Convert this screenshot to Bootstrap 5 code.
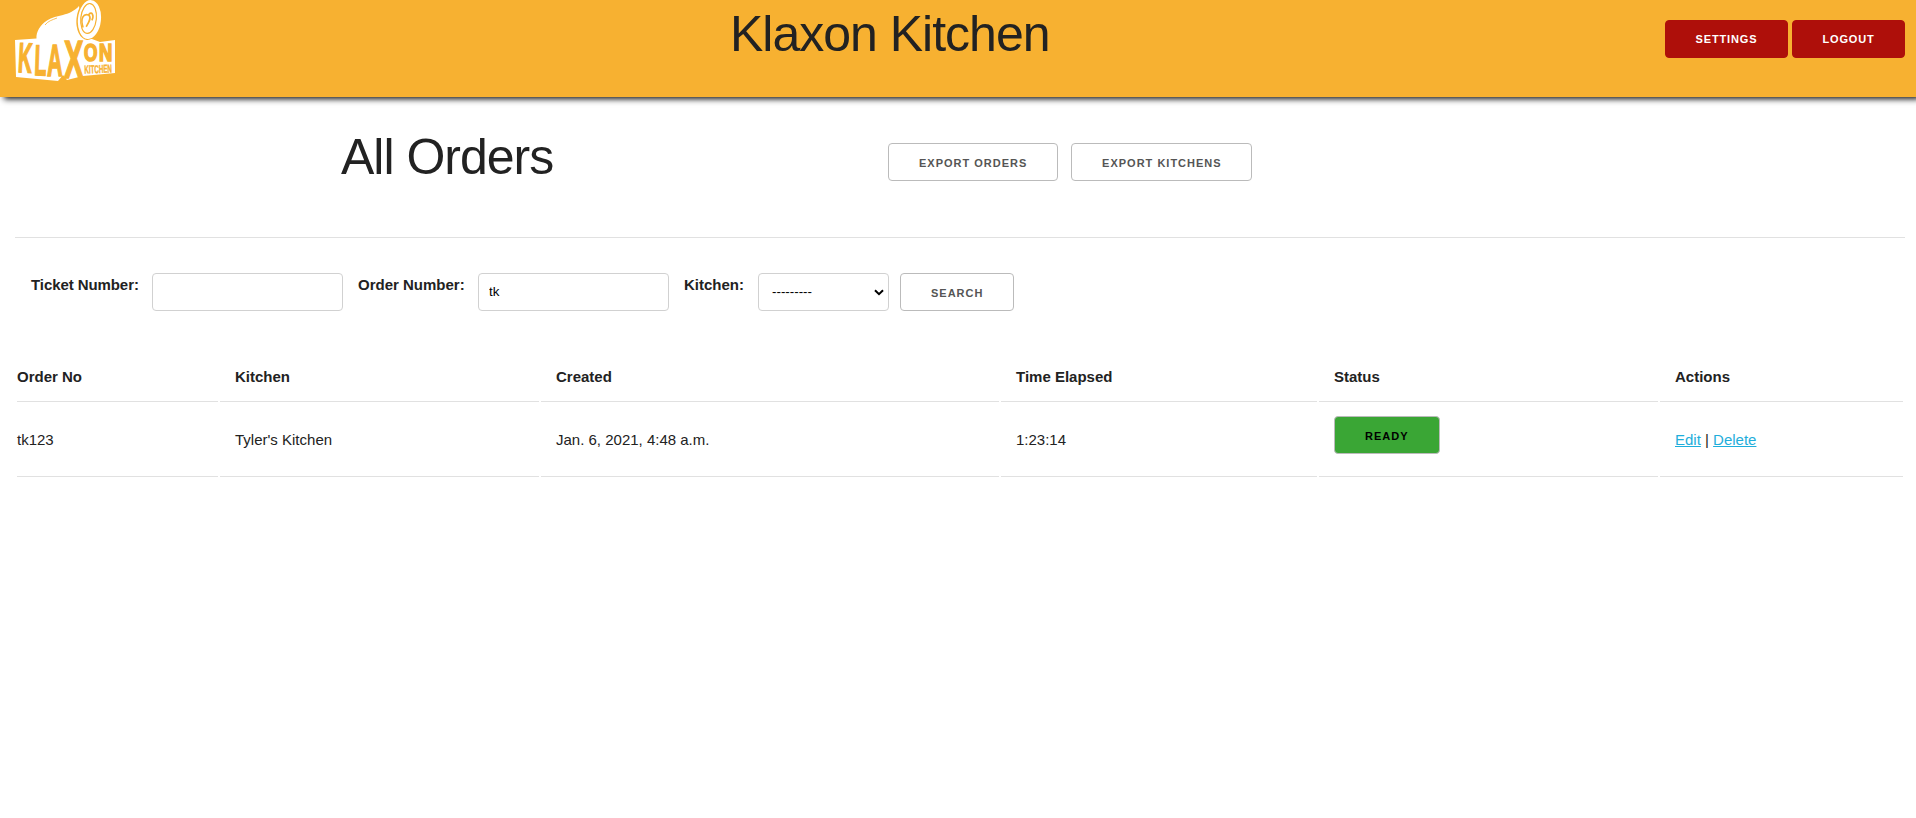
<!DOCTYPE html>
<html lang="en">
<head>
<meta charset="utf-8">
<title>Klaxon Kitchen</title>
<link href="https://cdn.jsdelivr.net/npm/bootstrap@5.3.0/dist/css/bootstrap.min.css" rel="stylesheet">
<style>
body{font:15px/24px "Liberation Sans",Arial,sans-serif;color:#222;background:#fff}
.topbar{height:97px;background:#f7b131;box-shadow:4px 2px 6px #111;padding:0 11px 0 15px}
h1{font-size:50px;line-height:60px;letter-spacing:-1px;font-weight:400;margin:0;color:#222}
.brand-logo{flex:none;overflow:visible}
.brand-logo text{font-family:"Liberation Sans",Arial,sans-serif;font-weight:700;fill:#f7b131;stroke:#f7b131;stroke-width:1.6px}
.brand-logo .logo-sub{stroke-width:.4px}
.brand-title{padding-top:4px;margin-left:613px}
.kbtn{height:38px;padding:2px 30px 0;font-size:11px;font-weight:600;line-height:34px;letter-spacing:1px;border:1px solid #bbb;border-radius:4px;color:#555;background:#fff;text-transform:uppercase;white-space:nowrap;text-align:center}
.kbtn-red{background:#ae0f0a;border-color:#ae0f0a;color:#fff;padding:0;line-height:36px;letter-spacing:.85px;width:123px}
.kbtn-logout{width:113px}
.kbtn-ready{background:#3aa635;border-color:#bbb;color:#000;margin-bottom:10px}
.kbtn-kitchens{width:181px;padding-left:0;padding-right:0}
.account{padding-top:20px}
.heading-row{height:141px;margin:0 11px 0 15px;border-bottom:1px solid #e1e1e1;padding-left:326px}
.heading-row h1{padding-top:30px;width:547px}
.exports{gap:13px;padding-top:46px}
.filters{padding:35px 0 0 31px;height:113px}
.filters label{font-weight:600;line-height:24px;white-space:nowrap}
.filters .form-control,.filters .form-select{width:191px;height:38px;padding:5px 10px 7px;border:1px solid #d1d1d1;border-radius:4px;font-size:13.333px;line-height:normal;color:#000}
.filters .form-select{width:131px;padding-left:13px;background:#fff url("data:image/svg+xml,%3Csvg xmlns='http://www.w3.org/2000/svg' width='10' height='7'%3E%3Cpath d='M1 1.2l4 4 4-4' fill='none' stroke='%23000' stroke-width='2'/%3E%3C/svg%3E") no-repeat right 4px center/10px 7px}
.label-ticket{width:121px;letter-spacing:-.08px}
.label-order{width:120px;margin-left:15px}
.label-kitchen{width:74px;margin-left:15px}
.btn-search{margin-left:11px}
.orders{width:1890px;margin-left:15px;border-collapse:separate;border-spacing:2px;table-layout:fixed}
.orders th,.orders td{padding:12px 15px;border-bottom:1px solid #e1e1e1;text-align:left;vertical-align:middle}
.orders th{font-weight:600}
.orders th:first-child,.orders td:first-child{padding-left:0}
.orders a{color:#1eaedb}
</style>
</head>
<body>
<header class="topbar d-flex align-items-start">
<svg class="brand-logo" width="102" height="83" viewBox="0 0 102 83" role="img" aria-label="Klaxon Kitchen">
<path fill="#fff" d="M0 40 21.5 38.5C21 32 25 25 32 20.500C42 14 54 17 64 6L69 36 85 42 100 40V73L68 76 52 80 48 75 43 81 1 77Z"/>
<g transform="rotate(6 74 19)">
<ellipse cx="74" cy="19.500" rx="12.500" ry="20.500" fill="#f7b131"/>
<ellipse cx="74.500" cy="19.500" rx="11.500" ry="19.500" fill="#fff"/>
<ellipse cx="73.500" cy="18.500" rx="7.800" ry="15" fill="none" stroke="#f7b131" stroke-width="1.200"/>
<path d="M69 28C65 19 68 14 73 15C77 17 74 23 72 27M73 15C76 10 79 15 77 20" fill="none" stroke="#f7b131" stroke-width="1.600"/>
</g>
<path d="M30 25c3-4 7-5 12-7" fill="none" stroke="#f7b131" stroke-width=".8"/>
<text transform="translate(2.500 72) rotate(3) scale(.46 1)" font-size="42">K</text>
<text transform="translate(19 75) rotate(2) scale(.46 1)" font-size="43">L</text>
<text transform="translate(32 76) scale(.48 1)" font-size="45">A</text>
<text transform="translate(49 78) scale(.55 1)" font-size="53">X</text>
<text transform="translate(69 61) scale(.75 1)" font-size="23">O</text>
<text transform="translate(84 61) scale(.8 1)" font-size="23">N</text>
<text class="logo-sub" transform="translate(69.500 73.500) rotate(-2) scale(.54 1)" font-size="11.500">KITCHEN</text>
</svg>
<h1 class="brand-title">Klaxon Kitchen</h1>
<nav class="account d-flex ms-auto gap-1"><button class="kbtn kbtn-red">Settings</button><button class="kbtn kbtn-red kbtn-logout">Logout</button></nav>
</header>
<main>
<section class="heading-row d-flex align-items-start"><h1>All Orders</h1>
<div class="exports d-flex"><button class="kbtn">Export Orders</button><button class="kbtn kbtn-kitchens">Export Kitchens</button></div></section>
<form class="filters d-flex align-items-start">
<label class="label-ticket" for="ticket">Ticket Number:</label><input id="ticket" class="form-control">
<label class="label-order" for="order">Order Number:</label><input id="order" class="form-control" value="tk">
<label class="label-kitchen" for="kitchen">Kitchen:</label><select id="kitchen" class="form-select"><option>---------</option></select>
<button type="button" class="kbtn btn-search">Search</button>
</form>
<table class="orders">
<colgroup><col style="width:201px"><col style="width:319px"><col style="width:458px"><col style="width:316px"><col style="width:339px"><col></colgroup>
<thead><tr><th>Order No</th><th>Kitchen</th><th>Created</th><th>Time Elapsed</th><th>Status</th><th>Actions</th></tr></thead>
<tbody><tr><td>tk123</td><td>Tyler's Kitchen</td><td>Jan. 6, 2021, 4:48 a.m.</td><td>1:23:14</td><td><button class="kbtn kbtn-ready d-block">Ready</button></td><td><a href="#">Edit</a> | <a href="#">Delete</a></td></tr></tbody>
</table>
</main>
<script src="https://cdn.jsdelivr.net/npm/bootstrap@5.3.0/dist/js/bootstrap.bundle.min.js"></script>
</body>
</html>
